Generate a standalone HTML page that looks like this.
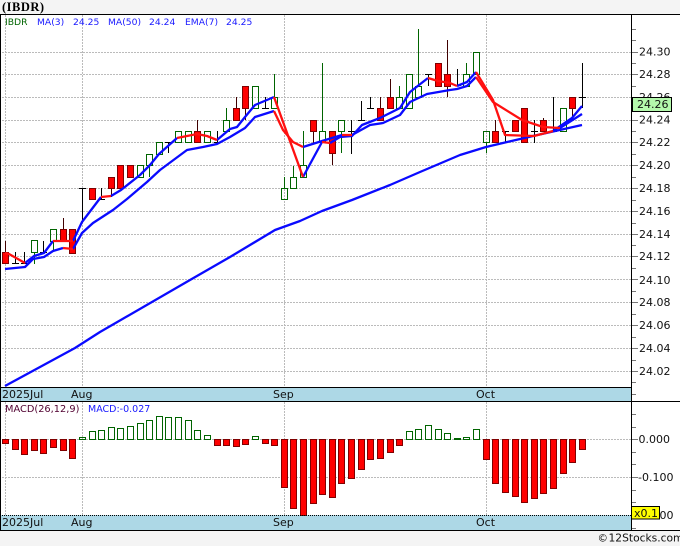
<!DOCTYPE html>
<html><head><meta charset="utf-8"><style>
html,body{margin:0;padding:0;background:#f4f4f4}
svg{display:block}
text{font-family:"DejaVu Sans","Liberation Sans",sans-serif}
</style></head><body>
<svg width="680" height="546" viewBox="0 0 680 546" xmlns="http://www.w3.org/2000/svg">
<rect width="680" height="546" fill="#f4f4f4"/>
<rect x="0" y="14" width="680" height="516" fill="#fff"/>
<rect x="0" y="388" width="632" height="13" fill="#add8e6"/>
<rect x="0" y="515" width="632" height="15" fill="#add8e6"/>
<g fill="none" stroke="#bbb" stroke-dasharray="2 1" shape-rendering="crispEdges">
<path d="M2 52.5H632M2 74.5H632M2 97.5H632M2 120.5H632M2 142.5H632M2 165.5H632M2 188.5H632M2 211.5H632M2 234.5H632M2 256.5H632M2 279.5H632M2 302.5H632M2 325.5H632M2 348.5H632M2 371.5H632M2 439.5H632M2 477.5H632"/>
<path d="M5.5 15V388M82.5 15V388M284.5 15V388M486.5 15V388M5.5 402V515M82.5 402V515M284.5 402V515M486.5 402V515"/>
</g>
<g fill="none" shape-rendering="crispEdges">
<path stroke="#006400" d="M34.5 252V264M53.5 241V252M149.5 166V177M226.5 108V120M274.5 74V97M284.5 177V188M293.5 166V177M303.5 131V166M322.5 63V131M341.5 131V153M399.5 86V97M418.5 29V86M466.5 63V74M486.5 143V153"/>
<path stroke="#006400" d="M31.5 240.5h6v12h-6zM50.5 229.5h6v12h-6zM137.5 165.5h6v12h-6zM146.5 154.5h6v11h-6zM156.5 142.5h6v12h-6zM175.5 131.5h6v11h-6zM185.5 131.5h6v11h-6zM204.5 131.5h6v11h-6zM223.5 120.5h6v11h-6zM252.5 86.5h6v22h-6zM271.5 97.5h6v11h-6zM281.5 188.5h6v11h-6zM290.5 177.5h6v11h-6zM300.5 165.5h6v12h-6zM319.5 131.5h6v11h-6zM338.5 120.5h6v11h-6zM396.5 97.5h6v11h-6zM406.5 74.5h6v34h-6zM415.5 86.5h6v11h-6zM463.5 74.5h6v12h-6zM473.5 52.5h6v22h-6zM483.5 131.5h6v11h-6zM560.5 108.5h6v23h-6z"/>
<path stroke="#400000" d="M5.5 241V252M63.5 218V229M111.5 188V197M197.5 120V131M236.5 97V108M245.5 108V120M313.5 131V143M332.5 153V165M380.5 97V108M390.5 79V97M447.5 40V74M447.5 86V97M495.5 120V131M543.5 118V120M572.5 108V117"/>
<path stroke="#000" d="M15.5 252V263M12 263.5H19M24.5 252V264M21 263.5H28M43.5 241V252M40 252.5H47M82.5 188V223M79 188.5H86M101.5 188V199M98 199.5H105M168.5 142V153M165 142.5H172M217.5 131V142M214 142.5H221M265.5 97V108M262 108.5H269M351.5 120V154M348 131.5H355M361.5 101V120M358 120.5H365M370.5 97V108M367 108.5H374M428.5 75V86M425 74.5H432M457.5 69V86M454 85.5H461M505.5 131V143M502 131.5H509M534.5 120V143M531 131.5H538M553.5 97V131M550 131.5H557M582.5 63V108M579 97.5H586"/>
<path fill="#f00" stroke="#800000" d="M2.5 252.5h6v11h-6zM60.5 229.5h6v12h-6zM69.5 229.5h6v24h-6zM89.5 188.5h6v11h-6zM108.5 177.5h6v11h-6zM117.5 165.5h6v23h-6zM127.5 165.5h6v12h-6zM194.5 131.5h6v11h-6zM233.5 108.5h6v12h-6zM242.5 86.5h6v22h-6zM310.5 120.5h6v11h-6zM329.5 131.5h6v22h-6zM377.5 108.5h6v12h-6zM387.5 97.5h6v11h-6zM435.5 63.5h6v23h-6zM444.5 74.5h6v12h-6zM492.5 131.5h6v11h-6zM512.5 120.5h6v11h-6zM521.5 108.5h6v34h-6zM540.5 120.5h6v11h-6zM569.5 97.5h6v11h-6z"/>
</g>
<g fill="none" stroke-width="2.3" stroke-linejoin="round">
<polyline stroke="#0a0aff" points="5,386 40,367 75,348 100,332 190,280 230,257 275,230 300,221 322,211 352,200 390,185 420,172 460,155 486,147 533,136 582,125"/>
<g stroke="#0a0aff">
<polyline points="25,263 34,256 44,253 53,241"/>
<polyline points="73,241 82,222 101,197"/>
<polyline points="111,196 121,190 140,175 150,165 159,154 177,138"/>
<polyline points="217,140 230,129 237,127 245,117 255,105 274,97"/>
<polyline points="303,177 322,142"/>
<polyline points="330,143 340,137 352,136 362,125 380,118 400,108 410,92 428,78"/>
<polyline points="457,86 467,82 476,72"/>
<polyline points="553,131 572,118 582,106"/>
<polyline points="5,269 25,267 33,259 44,257 53,251 63,248"/>
<polyline points="73,249 82,233 93,223 113,210 127,199 147,182 160,170 187,150 203,147 217,144 230,137 245,128 255,117 274,111"/>
<polyline points="303,147 322,141 342,135"/>
<polyline points="352,135 370,125 383,123 400,115 410,102 427,94 450,90 457,89 467,86 476,77"/>
<polyline points="560,128 582,114"/>
</g>
<g stroke="#ff1010">
<polyline points="5,253 9,254 25,263"/>
<polyline points="53,241 73,241"/>
<polyline points="101,197 111,196"/>
<polyline points="177,138 187,136 197,134 207,136 217,140"/>
<polyline points="274,97 303,177"/>
<polyline points="322,142 330,143"/>
<polyline points="428,78 438,81 450,83 457,86"/>
<polyline points="476,72 493,100 505,135 534,136 553,131"/>
<polyline points="63,248 73,249"/>
<polyline points="274,111 283,130 293,142 303,147"/>
<polyline points="342,135 352,135"/>
<polyline points="476,77 493,102 522,120 543,127 560,128"/>
</g>
</g>
<g shape-rendering="crispEdges">
<path fill="#f00" stroke="#800000" d="M2.5 439.5h6v4h-6zM12.5 439.5h6v10h-6zM21.5 439.5h6v15h-6zM31.5 439.5h6v11h-6zM40.5 439.5h6v14h-6zM50.5 439.5h6v8h-6zM60.5 439.5h6v11h-6zM69.5 439.5h6v19h-6zM214.5 439.5h6v6h-6zM223.5 439.5h6v6h-6zM233.5 439.5h6v7h-6zM242.5 439.5h6v5h-6zM262.5 439.5h6v4h-6zM271.5 439.5h6v6h-6zM281.5 439.5h6v48h-6zM290.5 439.5h6v69h-6zM300.5 439.5h6v76h-6zM310.5 439.5h6v64h-6zM319.5 439.5h6v55h-6zM329.5 439.5h6v58h-6zM338.5 439.5h6v44h-6zM348.5 439.5h6v39h-6zM358.5 439.5h6v30h-6zM367.5 439.5h6v20h-6zM377.5 439.5h6v19h-6zM387.5 439.5h6v13h-6zM396.5 439.5h6v6h-6zM483.5 439.5h6v20h-6zM492.5 439.5h6v44h-6zM502.5 439.5h6v53h-6zM512.5 439.5h6v57h-6zM521.5 439.5h6v63h-6zM531.5 439.5h6v59h-6zM540.5 439.5h6v54h-6zM550.5 439.5h6v49h-6zM560.5 439.5h6v34h-6zM569.5 439.5h6v23h-6zM579.5 439.5h6v10h-6z"/>
<path fill="none" stroke="#006400" d="M79.5 437.5h6v2h-6zM89.5 431.5h6v8h-6zM98.5 430.5h6v9h-6zM108.5 427.5h6v12h-6zM117.5 428.5h6v11h-6zM127.5 426.5h6v13h-6zM137.5 423.5h6v16h-6zM146.5 420.5h6v19h-6zM156.5 416.5h6v23h-6zM165.5 417.5h6v22h-6zM175.5 417.5h6v22h-6zM185.5 420.5h6v19h-6zM194.5 430.5h6v9h-6zM204.5 435.5h6v4h-6zM252.5 436.5h6v3h-6zM406.5 431.5h6v8h-6zM415.5 429.5h6v10h-6zM425.5 425.5h6v14h-6zM435.5 429.5h6v10h-6zM444.5 433.5h6v6h-6zM454.5 438.5h6v1h-6zM463.5 437.5h6v2h-6zM473.5 429.5h6v10h-6z"/>
<path fill="none" stroke="#000" d="M0 14.5H680M0 387.5H632M0 401.5H680M0 530.5H680M631.5 14V530"/>
<path fill="none" stroke="#000" stroke-dasharray="1 1" d="M0 515.5H632"/>
<rect x="0" y="14" width="1" height="516" fill="#000"/>
<path fill="none" stroke="#777" d="M632 29.5h4M632 40.5h4M632 63.5h4M632 86.5h4M632 109.5h4M632 131.5h4M632 154.5h4M632 177.5h4M632 200.5h4M632 223.5h4M632 245.5h4M632 268.5h4M632 291.5h4M632 314.5h4M632 337.5h4M632 360.5h4M632 382.5h4M632 394.5h4M632 414.5h4M632 427.5h4M632 452.5h4M632 464.5h4M632 490.5h4M632 502.5h4M632 528.5h4"/>
<path fill="none" stroke="#777" d="M632 52.5h6M632 74.5h6M632 97.5h6M632 120.5h6M632 142.5h6M632 165.5h6M632 188.5h6M632 211.5h6M632 234.5h6M632 256.5h6M632 279.5h6M632 302.5h6M632 325.5h6M632 348.5h6M632 371.5h6M632 439.5h6M632 477.5h6"/>
</g>
<g font-size="11" fill="#111">
<text x="639" y="55.5">24.30</text><text x="639" y="78">24.28</text><text x="639" y="101">24.26</text><text x="639" y="123.5">24.24</text><text x="639" y="146">24.22</text><text x="639" y="169">24.20</text><text x="639" y="192">24.18</text><text x="639" y="215">24.16</text><text x="639" y="238">24.14</text><text x="639" y="260">24.12</text><text x="639" y="284">24.10</text><text x="639" y="306">24.08</text><text x="639" y="329">24.06</text><text x="639" y="352">24.04</text><text x="639" y="375">24.02</text>
<text x="638.5" y="443">0.000</text><text x="638" y="481">-0.100</text><text x="638" y="519">-0.200</text>
<text x="2" y="398">2025Jul</text><text x="71" y="398">Aug</text><text x="273" y="398">Sep</text><text x="476" y="398">Oct</text>
<text x="2" y="526">2025Jul</text><text x="71" y="526">Aug</text><text x="273" y="526">Sep</text><text x="476" y="526">Oct</text>
</g>
<rect x="632.5" y="97.5" width="39" height="14" fill="#b4f8ac" stroke="#000" shape-rendering="crispEdges"/>
<text x="637" y="108" font-size="11" fill="#111">24.26</text>
<rect x="631.5" y="506.5" width="28" height="12.5" fill="#ff0" stroke="#000" shape-rendering="crispEdges"/>
<text x="634" y="517" font-size="11" fill="#111">x0.1</text>
<g font-size="9.2">
<text x="5" y="25" fill="#006400">IBDR</text>
<text x="37" y="25" fill="#1a1aff">MA(3)</text>
<text x="73" y="25" fill="#1a1aff">24.25</text>
<text x="108" y="25" fill="#1a1aff">MA(50)</text>
<text x="149" y="25" fill="#1a1aff">24.24</text>
<text x="185" y="25" fill="#1a1aff">EMA(7)</text>
<text x="226" y="25" fill="#1a1aff">24.25</text>
</g>
<text x="5" y="412" font-size="9.8" fill="#500030">MACD(26,12,9)</text>
<text x="88" y="412" font-size="9.5" fill="#1a1aff">MACD:-0.027</text>
<text x="2" y="11" font-size="12.5" font-weight="bold" letter-spacing=".5" fill="#000" style="font-family:'Liberation Serif',serif">(IBDR)</text>
<text x="597.5" y="541.5" font-size="10.5" fill="#111">©</text>
<text x="608.5" y="541.5" font-size="10.7" fill="#111">12Stocks.com</text>
</svg>
</body></html>
